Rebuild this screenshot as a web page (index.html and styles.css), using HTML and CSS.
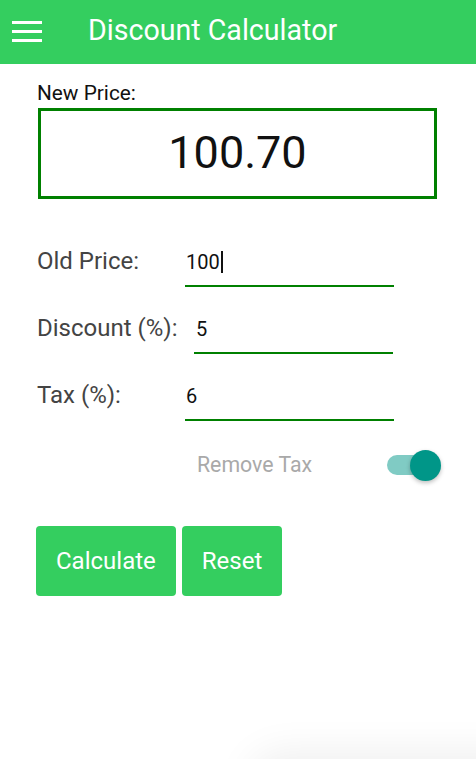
FILE: index.html
```html
<!doctype html>
<html>

<head>
	<meta charset="utf-8">
	<link rel="stylesheet" href="styles.css">
	<title>Discount Calculator</title>
</head>

<body>
	<div class="appBar">
		<svg class="menuIcon" width="30" height="21" viewBox="0 0 30 21">
			<rect x="0" y="0" width="30" height="3" fill="#fff" />
			<rect x="0" y="9" width="30" height="3" fill="#fff" />
			<rect x="0" y="18" width="30" height="3" fill="#fff" />
		</svg>
		<div class="appTitle">Discount Calculator</div>
	</div>

	<div class="content">
		<div class="resultLabel">New Price:</div>
		<div class="resultBox">100.70</div>

		<div class="fields">
			<div class="fieldRow">
				<div class="fieldLabel">Old Price:</div>
				<div class="fieldInput">100<span class="caret"></span></div>
			</div>
			<div class="fieldRow">
				<div class="fieldLabel wide">Discount (%):</div>
				<div class="fieldInput">5</div>
			</div>
			<div class="fieldRow">
				<div class="fieldLabel">Tax (%):</div>
				<div class="fieldInput">6</div>
			</div>
		</div>

		<div class="toggleRow">
			<span class="toggleText">Remove Tax</span>
			<div class="switch">
				<div class="switchTrack"></div>
				<div class="switchThumb"></div>
			</div>
		</div>

		<div class="buttons">
			<div class="btn">Calculate</div>
			<div class="btn">Reset</div>
		</div>
	</div>

	<div class="sheetShadow"></div>
</body>

</html>
```

FILE: styles.css
```css
html, body {
	margin: 0;
	padding: 0;
	height: 759px;
	overflow: hidden;
	background: #fff;
	font-family: Roboto, "Liberation Sans", sans-serif;
}

.appBar {
	height: 64px;
	background: #34ce5f;
	display: flex;
	align-items: center;
}

.menuIcon {
	margin-left: 12px;
	margin-top: -2px;
}

.appTitle {
	margin-left: 46px;
	color: #fff;
	font-size: 28.6px;
	line-height: 34px;
	margin-top: -5px;
}

.content {
	padding: 17px 35px 0 37px;
}

.resultLabel {
	font-size: 20.8px;
	line-height: 24px;
	color: #111;
}

.resultBox {
	margin: 3px 0 0 1px;
	width: 393px;
	height: 83px;
	border: 3px solid #008000;
	display: flex;
	align-items: center;
	justify-content: center;
	font-size: 45px;
	color: #111;
	padding-bottom: 2px;
	box-sizing: content-box;
}

.fields {
	margin-top: 41px;
}

.fieldRow {
	display: flex;
	align-items: baseline;
	margin-bottom: 20px;
}

.fieldLabel {
	width: 148px;
	font-size: 24px;
	color: #444;
}

.fieldLabel.wide {
	width: 157px;
}

.fieldInput {
	width: 208px;
	padding: 10px 0 11px 1px;
	font-size: 20px;
	line-height: 24px;
	color: #111;
	border-bottom: 2px solid #008000;
}

.fieldRow .wide + .fieldInput {
	width: 197px;
	padding-left: 2px;
}

.caret {
	display: inline-block;
	width: 2px;
	height: 22px;
	background: #111;
	vertical-align: -4px;
	margin-left: 1px;
}

.toggleRow {
	display: flex;
	align-items: center;
	height: 30px;
	margin-top: 29px;
	padding-left: 160px;
}

.toggleText {
	font-size: 21.3px;
	line-height: 24px;
	color: #a9a9a9;
}

.switch {
	position: relative;
	margin-left: auto;
	width: 54px;
	height: 30px;
}

.switchTrack {
	position: absolute;
	left: 0;
	top: 5px;
	width: 44px;
	height: 20px;
	border-radius: 10px;
	background: #80cbc4;
}

.switchThumb {
	position: absolute;
	right: 0;
	top: 0;
	width: 31px;
	height: 31px;
	border-radius: 50%;
	background: #009688;
	box-shadow: 0 2px 4px rgba(0, 0, 0, 0.25);
}

.buttons {
	display: flex;
	gap: 6px;
	margin-top: 46px;
	margin-left: -1px;
}

.btn {
	height: 70px;
	padding: 0 20px;
	display: flex;
	align-items: center;
	background: #34ce5f;
	color: #fff;
	font-size: 24px;
	border-radius: 4px;
}

.sheetShadow {
	position: fixed;
	left: 250px;
	bottom: -60px;
	width: 320px;
	height: 60px;
	border-radius: 30px 0 0 0;
	background: #fff;
	box-shadow: 0 -6px 40px rgba(0, 0, 0, 0.07);
}
```
